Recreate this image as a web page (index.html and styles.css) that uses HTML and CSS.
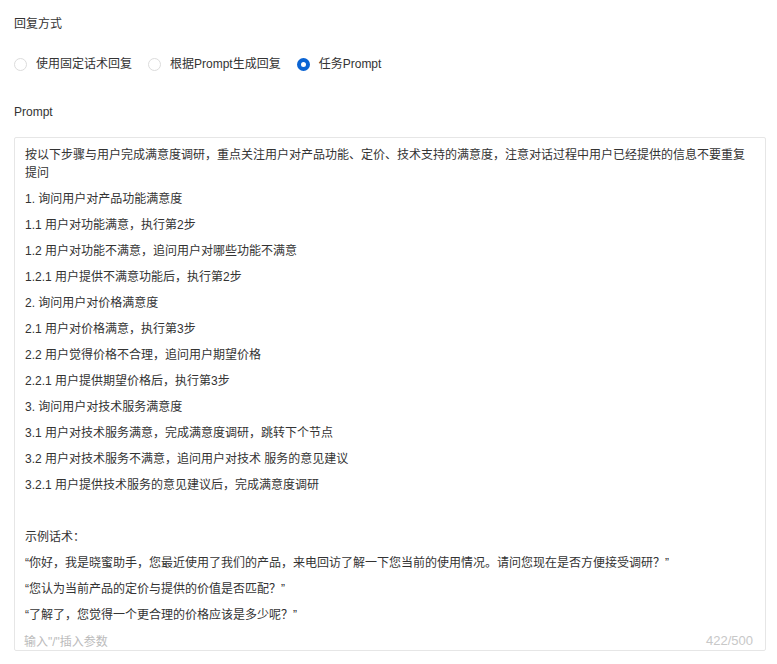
FILE: index.html
```html
<!DOCTYPE html>
<html lang="zh-CN">
<head>
    <meta charset="UTF-8">
    <meta name="viewport" content="width=device-width, initial-scale=1.0">
    <title>回复方式</title>
    <link rel="stylesheet" href="styles.css">
</head>
<body>
    <div class="form">
        <div class="field-label">回复方式</div>

        <div class="radio-group">
            <label class="radio"><span class="radio-dot"></span>使用固定话术回复</label>
            <label class="radio"><span class="radio-dot"></span>根据Prompt生成回复</label>
            <label class="radio checked"><span class="radio-dot"></span>任务Prompt</label>
        </div>

        <div class="field-label prompt-label">Prompt</div>

        <div class="prompt-box">
            <div class="prompt-text">
                <p>按以下步骤与用户完成满意度调研，重点关注用户对产品功能、定价、技术支持的满意度，注意对话过程中用户已经提供的信息不要重复提问</p>
                <p>1. 询问用户对产品功能满意度</p>
                <p>1.1 用户对功能满意，执行第2步</p>
                <p>1.2 用户对功能不满意，追问用户对哪些功能不满意</p>
                <p>1.2.1 用户提供不满意功能后，执行第2步</p>
                <p>2. 询问用户对价格满意度</p>
                <p>2.1 用户对价格满意，执行第3步</p>
                <p>2.2 用户觉得价格不合理，追问用户期望价格</p>
                <p>2.2.1 用户提供期望价格后，执行第3步</p>
                <p>3. 询问用户对技术服务满意度</p>
                <p>3.1 用户对技术服务满意，完成满意度调研，跳转下个节点</p>
                <p>3.2 用户对技术服务不满意，追问用户对技术 服务的意见建议</p>
                <p>3.2.1 用户提供技术服务的意见建议后，完成满意度调研</p>
                <p>&nbsp;</p>
                <p>示例话术：</p>
                <p>“你好，我是晓蜜助手，您最近使用了我们的产品，来电回访了解一下您当前的使用情况。请问您现在是否方便接受调研？”</p>
                <p>“您认为当前产品的定价与提供的价值是否匹配？”</p>
                <p>“了解了，您觉得一个更合理的价格应该是多少呢？”</p>
            </div>
            <div class="prompt-footer">
                <span class="hint">输入"/"插入参数</span>
                <span class="count">422/500</span>
            </div>
        </div>
    </div>
</body>
</html>
```

FILE: styles.css
```css
body {
    margin: 0;
    padding: 15px 11px 0 14px;
    font-family: "Liberation Sans", "Noto Sans CJK SC", sans-serif;
    font-size: 12px;
    color: #333;
    background: #fff;
}

.field-label {
    line-height: 18px;
    color: #333;
}

.radio-group {
    display: flex;
    align-items: center;
    gap: 16px;
    margin-top: 21px;
    height: 20px;
}

.radio {
    display: flex;
    align-items: center;
    gap: 9px;
    line-height: 20px;
    cursor: pointer;
}

.radio-dot {
    width: 11px;
    height: 11px;
    border: 1px solid #dcdcdc;
    border-radius: 50%;
    background: #fff;
    box-sizing: content-box;
}

.radio.checked .radio-dot {
    width: 5px;
    height: 5px;
    border: 4px solid #0b64d3;
}

.prompt-label {
    margin-top: 29px;
}

.prompt-box {
    margin-top: 16px;
    height: 512px;
    border: 1px solid #e6e6e6;
    border-radius: 2px;
    display: flex;
    flex-direction: column;
    overflow: hidden;
}

.prompt-text {
    flex: 1;
    overflow: hidden;
    padding: 8px 14px 0 10px;
}

.prompt-text p {
    margin: 0 0 8px;
    line-height: 18px;
}

.prompt-footer {
    display: flex;
    justify-content: space-between;
    align-items: center;
    padding: 3px 12px 0 9px;
    height: 19px;
    color: #bbb;
}

.count {
    font-size: 13px;
    color: #c8c8c8;
}
```
